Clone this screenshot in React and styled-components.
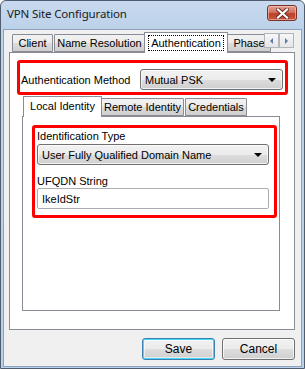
import React from "react";
import styled, { createGlobalStyle } from "styled-components";

const GlobalStyle = createGlobalStyle`
  html, body {
    margin: 0;
    padding: 0;
    background: #ffffff;
  }
  * {
    box-sizing: border-box;
  }
`;

const App = () => {
  return (
    <>
      <GlobalStyle />
      <Window>
        <TitleBar>
          <Title>VPN Site Configuration</Title>
          <CloseButton>
            <svg width="13" height="11" viewBox="0 0 13 11">
              <path
                d="M2 1.5 L11 9.5 M11 1.5 L2 9.5"
                stroke="#6b2a20"
                strokeWidth="4"
                strokeLinecap="square"
              />
              <path
                d="M2 1.5 L11 9.5 M11 1.5 L2 9.5"
                stroke="#ffffff"
                strokeWidth="2.2"
                strokeLinecap="square"
              />
            </svg>
          </CloseButton>
        </TitleBar>
        <Body>
          <TabStrip>
            <Tab w={41}>Client</Tab>
            <Tab w={91}>Name Resolution</Tab>
            <Tab w={84} selected>
              <Focus>Authentication</Focus>
            </Tab>
            <Tab w={44}>Phase</Tab>
            <Scroller>
              <ScrollButton>
                <Arrow dir="left" />
              </ScrollButton>
              <ScrollButton>
                <Arrow dir="right" />
              </ScrollButton>
            </Scroller>
          </TabStrip>
          <Panel>
            <Highlight method>
              <Label>Authentication Method</Label>
              <Combo width="143px">
                <span>Mutual PSK</span>
                <DropArrow />
              </Combo>
            </Highlight>
            <InnerTabs>
              <TabStrip>
                <Tab w={79} selected>Local Identity</Tab>
                <Tab w={83}>Remote Identity</Tab>
                <Tab w={62}>Credentials</Tab>
              </TabStrip>
              <InnerPanel>
                <Highlight>
                  <FieldLabel>Identification Type</FieldLabel>
                  <Combo width="232px">
                    <span>User Fully Qualified Domain Name</span>
                    <DropArrow />
                  </Combo>
                  <FieldLabel spaced>UFQDN String</FieldLabel>
                  <TextInput>IkeIdStr</TextInput>
                </Highlight>
              </InnerPanel>
            </InnerTabs>
          </Panel>
          <Buttons>
            <Button primary>Save</Button>
            <Button>Cancel</Button>
          </Buttons>
        </Body>
      </Window>
    </>
  );
};

export default App;

// Styled Components
const Window = styled.div`
  width: 305px;
  height: 369px;
  display: flex;
  flex-direction: column;
  border: 1px solid #4f5d6e;
  border-top-left-radius: 6px;
  border-top-right-radius: 6px;
  background: linear-gradient(#c7d9ee, #bcd2ea 30px, #b9d1ea);
  padding: 0 2px 2px 2px;
  font-family: "Liberation Sans", Arial, sans-serif;
  font-size: 11px;
  color: #000;
  overflow: hidden;
`;

const TitleBar = styled.div`
  height: 28px;
  flex: none;
  display: flex;
  align-items: flex-start;
  justify-content: space-between;
  padding: 5px 5px 0 4px;
`;

const Title = styled.div`
  font-family: "Noto Sans", "Open Sans", sans-serif;
  font-size: 11.5px;
  line-height: 16px;
  color: #1b1b1b;
  letter-spacing: -0.15px;
`;

const CloseButton = styled.div`
  width: 30px;
  height: 16px;
  margin-top: -1px;
  border: 1px solid #7a3329;
  border-radius: 3px;
  background: linear-gradient(#e3a193, #d0735f 45%, #bd3f27 55%, #c9583f);
  box-shadow: inset 0 0 0 1px rgba(255, 210, 200, 0.55);
  display: flex;
  align-items: center;
  justify-content: center;
`;

const Body = styled.div`
  flex: 1;
  display: flex;
  flex-direction: column;
  background: #f0f0f0;
  border: 1px solid #8da2ba;
  padding: 2px 6px 6px 5px;
`;

const TabStrip = styled.div`
  height: 20px;
  flex: none;
  display: flex;
  align-items: flex-end;
  gap: 1px;
  padding-left: 3px;
  position: relative;
  z-index: 1;
`;

const Tab = styled.div`
  width: ${({ w }) => w}px;
  flex: none;
  height: ${({ selected }) => (selected ? "21px" : "18px")};
  margin: ${({ selected }) => (selected ? "0 -2px -1px -2px" : "0")};
  padding-top: ${({ selected }) => (selected ? "2px" : "1px")};
  border: 1px solid #898c95;
  border-bottom: ${({ selected }) => (selected ? "none" : "1px solid #898c95")};
  border-radius: 1px 1px 0 0;
  background: ${({ selected }) =>
    selected
      ? "#ffffff"
      : "linear-gradient(#f2f2f2, #ebebeb 50%, #dddddd 51%, #cfcfcf)"};
  font-size: 11px;
  line-height: 14px;
  text-align: center;
  white-space: nowrap;
  position: relative;
  z-index: ${({ selected }) => (selected ? 2 : 1)};
`;

const Focus = styled.span`
  display: inline-block;
  border: 1px dotted #000;
  padding: 0 2px;
  line-height: 14px;
`;

const Scroller = styled.div`
  position: absolute;
  right: 1px;
  top: 1px;
  display: flex;
  z-index: 3;
`;

const ScrollButton = styled.div`
  width: 15px;
  height: 15px;
  border: 1px solid #b1b5be;
  background: linear-gradient(#f7f7f7, #e6e6e6);
  display: flex;
  align-items: center;
  justify-content: center;
`;

const Arrow = styled.span`
  width: 0;
  height: 0;
  border-top: 3px solid transparent;
  border-bottom: 3px solid transparent;
  ${({ dir }) =>
    dir === "left"
      ? "border-right: 3px solid #5a7ba6;"
      : "border-left: 3px solid #5a7ba6;"}
`;

const Panel = styled.div`
  height: 278px;
  flex: none;
  border: 1px solid #898c95;
  background: #ffffff;
  padding: 7px 7px 0 7px;
  display: flex;
  flex-direction: column;
`;

const Highlight = styled.div`
  border: 3px solid #ff0000;
  border-radius: 3px;
  display: flex;
  flex-direction: ${({ method }) => (method ? "row" : "column")};
  align-items: ${({ method }) => (method ? "center" : "flex-start")};
  justify-content: ${({ method }) => (method ? "space-between" : "flex-start")};
  padding: ${({ method }) => (method ? "6px 2px 2px 1px" : "1px 5px 6px 2px")};
  width: ${({ method }) => (method ? "271px" : "245px")};
`;

const Label = styled.div`
  padding-top: 1px;
  white-space: nowrap;
`;

const FieldLabel = styled.div`
  line-height: 14px;
  margin: ${({ spaced }) => (spaced ? "9px 0 0 0" : "0 0 1px 0")};
`;

const Combo = styled.div`
  width: ${({ width }) => width};
  height: 21px;
  border: 1px solid #707070;
  border-radius: 3px;
  background: linear-gradient(#f2f2f2, #ebebeb 50%, #dddddd 51%, #cfcfcf);
  box-shadow: inset 0 0 0 1px rgba(255, 255, 255, 0.7);
  display: flex;
  align-items: center;
  justify-content: space-between;
  padding: 0 6px 0 4px;
  white-space: nowrap;
`;

const DropArrow = styled.span`
  width: 0;
  height: 0;
  border-left: 4px solid transparent;
  border-right: 4px solid transparent;
  border-top: 4px solid #000;
  margin-top: 1px;
`;

const TextInput = styled.div`
  height: 21px;
  width: 232px;
  border: 1px solid #abadb3;
  border-top-color: #abadb3;
  border-radius: 2px;
  background: #ffffff;
  display: flex;
  align-items: center;
  padding: 0 4px;
`;

const InnerTabs = styled.div`
  margin-top: 1px;
  margin-left: 5px;
  width: 258px;
  display: flex;
  flex-direction: column;
`;

const InnerPanel = styled.div`
  height: 195px;
  border: 1px solid #898c95;
  background: #ffffff;
  padding: 8px 0 0 9px;
`;

const Buttons = styled.div`
  margin-top: 8px;
  display: flex;
  justify-content: flex-end;
  gap: 7px;
`;

const Button = styled.div`
  width: 73px;
  height: 22px;
  border: 1px solid ${({ primary }) => (primary ? "#3c7fb1" : "#707070")};
  border-radius: 3px;
  background: linear-gradient(#f2f2f2, #ebebeb 50%, #dddddd 51%, #cfcfcf);
  box-shadow: ${({ primary }) =>
    primary
      ? "inset 0 0 0 1px #48d8fb, inset 0 0 0 2px rgba(255,255,255,0.5)"
      : "inset 0 0 0 1px rgba(255, 255, 255, 0.7)"};
  display: flex;
  align-items: center;
  justify-content: center;
  font-size: 12px;
`;
